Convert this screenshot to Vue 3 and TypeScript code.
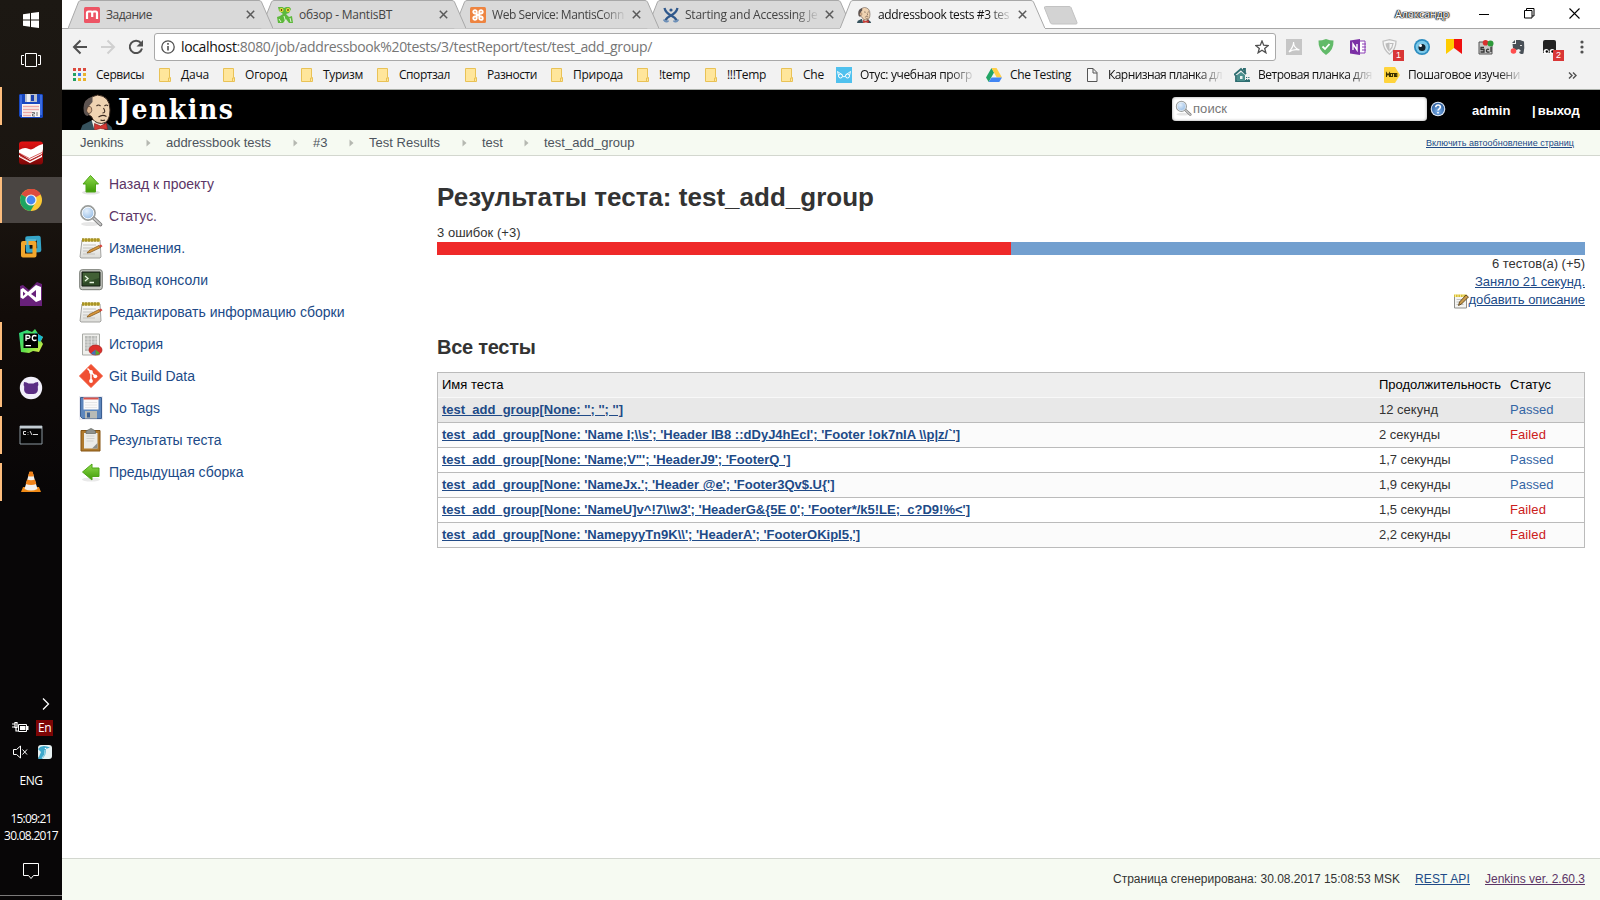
<script setup lang="ts">
interface Tab { title: string; icon: string; w?: number; active?: boolean; long?: boolean }
interface Mark { label: string; icon: string; slot: number; w: number; fade?: boolean }
interface TestRow { name: string; w: number; time: string; tw: number; ok: boolean }

// Spreads or tightens the tracking of a label so that it fills the given width.
const vFit = {
  mounted(el: HTMLElement, binding: { value?: number }) {
    if (!binding.value) return
    const n = (el.textContent || '').trim().length
    const width = el.getBoundingClientRect().width
    el.style.letterSpacing = ((binding.value - width) / n).toFixed(3) + 'px'
  },
}

const dock = [
  { icon: 'floppy', run: true }, { icon: 'reader' }, { icon: 'chrome', run: true, active: true },
  { icon: 'vm' }, { icon: 'vs' }, { icon: 'pycharm', run: true }, { icon: 'cat', run: true },
  { icon: 'cmd', run: true }, { icon: 'cone', run: true },
]

const tabs: Tab[] = [
  { title: 'Задание', icon: 'f-m', w: 46 },
  { title: 'обзор - MantisBT', icon: 'f-mantis', w: 93 },
  { title: 'Web Service: MantisConn', icon: 'f-xampp', w: 132, long: true },
  { title: 'Starting and Accessing Je', icon: 'f-conf', w: 132.5, long: true },
  { title: 'addressbook tests #3 tes', icon: 'butler', w: 131, active: true, long: true },
]

const marks: Mark[] = [
  { label: 'Сервисы', icon: 'b-apps', slot: 85, w: 48 },
  { label: 'Дача', icon: 'b-folder', slot: 64, w: 28 },
  { label: 'Огород', icon: 'b-folder', slot: 78, w: 42 },
  { label: 'Туризм', icon: 'b-folder', slot: 76, w: 40 },
  { label: 'Спортзал', icon: 'b-folder', slot: 88, w: 51 },
  { label: 'Разности', icon: 'b-folder', slot: 86, w: 50 },
  { label: 'Природа', icon: 'b-folder', slot: 86, w: 50 },
  { label: '!temp', icon: 'b-folder', slot: 68, w: 31 },
  { label: '!!!Temp', icon: 'b-folder', slot: 76, w: 39 },
  { label: 'Che', icon: 'b-folder', slot: 57, w: 21 },
  { label: 'Отус: учебная прогр', icon: 'b-otus', slot: 150, w: 112, fade: true },
  { label: 'Che Testing', icon: 'b-drive', slot: 98, w: 61 },
  { label: 'Карнизная планка дл', icon: 'b-doc', slot: 150, w: 114, fade: true },
  { label: 'Ветровая планка для', icon: 'b-house', slot: 150, w: 114, fade: true },
  { label: 'Пошаговое изучени', icon: 'b-moto', slot: 150, w: 112, fade: true },
]

const exts = [
  { icon: 'e-pdf' }, { icon: 'e-shield' }, { icon: 'e-note' }, { icon: 'e-v', badge: '1' }, { icon: 'e-eye' },
  { icon: 'e-ya' }, { icon: 'e-sel' }, { icon: 'e-ever' }, { icon: 'e-tamper', badge: '2' },
]

const crumbs = [
  { t: 'Jenkins', w: 43.5, slot: 86 }, { t: 'addressbook tests', w: 105, slot: 147 }, { t: '#3', w: 14.5, slot: 56 },
  { t: 'Test Results', w: 71, slot: 113 }, { t: 'test', w: 21, slot: 62 }, { t: 'test_add_group', w: 90.5, slot: 100 },
]

const tasks = [
  { t: 'Назад к проекту', icon: 'up', w: 105, seen: true },
  { t: 'Статус.', icon: 'search', w: 48, seen: true },
  { t: 'Изменения.', icon: 'notepad', w: 76 },
  { t: 'Вывод консоли', icon: 'terminal', w: 99 },
  { t: 'Редактировать информацию сборки', icon: 'notepad', w: 235.5 },
  { t: 'История', icon: 'graph', w: 54 },
  { t: 'Git Build Data', icon: 'git', w: 86 },
  { t: 'No Tags', icon: 'save', w: 51 },
  { t: 'Результаты теста', icon: 'clipboard', w: 112.5 },
  { t: 'Предыдущая сборка', icon: 'prev', w: 134.5 },
]

const rows: TestRow[] = [
  { name: `test_add_group[None: ''; ''; '']`, w: 181, time: '12 секунд', tw: 59, ok: true },
  { name: `test_add_group[None: 'Name I;\\\\s'; 'Header IB8 ::dDyJ4hEcI'; 'Footer !ok7nIA \\\\p|z/\`']`, w: 518, time: '2 секунды', tw: 61, ok: false },
  { name: `test_add_group[None: 'Name;V"'; 'HeaderJ9'; 'FooterQ ']`, w: 348.5, time: '1,7 секунды', tw: 71.5, ok: true },
  { name: `test_add_group[None: 'NameJx.'; 'Header @e'; 'Footer3Qv$.U{']`, w: 392.5, time: '1,9 секунды', tw: 71.5, ok: true },
  { name: `test_add_group[None: 'NameU]v^!7\\\\w3'; 'HeaderG&{5E 0'; 'Footer*/k5!LE;_c?D9!%<']`, w: 528, time: '1,5 секунды', tw: 71.5, ok: false },
  { name: `test_add_group[None: 'NamepyyTn9K\\\\'; 'HeaderA'; 'FooterOKipI5,']`, w: 418, time: '2,2 секунды', tw: 71.5, ok: false },
]
</script>

<template>
  <div class="screen">
    <svg class="defs" width="0" height="0" aria-hidden="true">
      <defs>
        <linearGradient id="gGreen" x1="0" y1="0" x2="0" y2="1"><stop offset="0" stop-color="#8fdc4c" /><stop offset="1" stop-color="#3f9a06" /></linearGradient>
        <linearGradient id="gTeal" x1="0" y1="0" x2="1" y2="1"><stop offset="0" stop-color="#21d789" /><stop offset=".55" stop-color="#5fe04a" /><stop offset="1" stop-color="#f4ee46" /></linearGradient>
        <linearGradient id="gRed" x1="0" y1="0" x2="0" y2="1"><stop offset="0" stop-color="#e31313" /><stop offset="1" stop-color="#7d0707" /></linearGradient>
        <linearGradient id="gPaper" x1="0" y1="0" x2="0" y2="1"><stop offset="0" stop-color="#fff" /><stop offset="1" stop-color="#dcdcd8" /></linearGradient>
        <radialGradient id="gLens" cx=".4" cy=".35" r=".7"><stop offset="0" stop-color="#e4f0fc" /><stop offset="1" stop-color="#8fb8e4" /></radialGradient>
        <radialGradient id="gBlue" cx=".5" cy=".7" r=".6"><stop offset="0" stop-color="#79aee8" /><stop offset="1" stop-color="#3465a4" /></radialGradient>
      </defs>
      <symbol id="floppy" viewBox="0 0 24 24"><path d="M1 0h22l1 1v22l-1 1H2l-2-2V1z" fill="#1747c0" /><path d="M1 1h2v20H1zM21 1h2v20h-2z" fill="#3a6be0" /><path d="M6 0h12v8H6z" fill="#b9bfca" /><path d="M8 0h3v8H8z" fill="#eceff4" /><path d="M12 1h3v6h-3z" fill="#1a3fae" /><path d="M3 10h18v13H3z" fill="#f8f4f2" /><path d="M4 12.500h16M4 15.500h16M4 18.500h9M4 21.500h8" stroke="#eba7a7" stroke-width="1.400" /><path d="M13 18.500h2.500v1.500h-2v2h2.500M18 18v4" stroke="#555" fill="none" stroke-width=".8" /></symbol>
      <symbol id="reader" viewBox="0 0 24 24"><rect width="24" height="23" y=".5" rx="3" fill="url(#gRed)" /><path d="M0 9c4-2 6-3 10-1s6-3 14-5v5l-1 5-12 6L0 12z" fill="#fff" /><path d="M0 14l11 6 12-6v2l-12 6L0 16z" fill="#fff" /><path d="M0 12l10.500 5.500L23 11.500M1 15l10 5 11-5.500" stroke="#c51a1a" fill="none" stroke-width=".7" /></symbol>
      <symbol id="chrome" viewBox="0 0 24 24"><circle cx="12" cy="12" r="11" fill="#fbc934" /><path d="M12 12L2.500 6.500A11 11 0 0 1 21.500 6.500z" fill="#dd4b3e" /><path d="M12 6.500h9.800A11 11 0 0 0 12 1z" fill="#dd4b3e" /><path d="M2.500 6.500A11 11 0 0 0 11.500 23l5-8.500L12 12z" fill="#1da462" /><circle cx="12" cy="12" r="5.600" fill="#f3f3f3" /><circle cx="12" cy="12" r="4.400" fill="#4787f0" /></symbol>
      <symbol id="vm" viewBox="0 0 24 24"><path d="M8.500 3h11.500v12.500H8.500z" fill="none" stroke="#35a5c8" stroke-width="4" stroke-linejoin="round" transform="rotate(-3 14 9)" /><path d="M4 8h11.500v12.500H4z" fill="none" stroke="#f1a62c" stroke-width="4" stroke-linejoin="round" /><path d="M8.500 10V5h9" fill="none" stroke="#55b7d0" stroke-width="2" /></symbol>
      <symbol id="vs" viewBox="0 0 24 24"><path d="M1 4l3-1 6 5 8-8 5 2v22H1z" fill="#68217a" /><path d="M1.500 7.500L4 6l5 4 8-7 5 2v13l-5 2-8-7-5 4-2.500-1.500z" fill="#fff" /><path d="M4 9.500v4.500l2.500-2.200zM17 8v7.500L12 12z" fill="#68217a" /></symbol>
      <symbol id="pycharm" viewBox="0 0 24 24"><path d="M0 4l8-3 5 2 3-3 4 6 4 2-2 4 2 3-4 8-6-1-4 2-8-1z" fill="url(#gTeal)" /><path d="M16 3l8 5-3 5-5-4z" fill="#18b5d1" /><path d="M4.500 4.500h14.500v14.500H4.500z" fill="#000" /><path d="M7 12V6.500h2q2 0 2 1.500T9 9.500H7M17.500 7.300q-1-.8-2-.8-2.200 0-2.200 2.500t2.200 2.500q1 0 2-.8" fill="none" stroke="#fff" stroke-width="1.300" /><path d="M6.500 16h5.500v1.300H6.500z" fill="#fff" /></symbol>
      <symbol id="cat" viewBox="0 0 24 24"><circle cx="12" cy="12" r="11.200" fill="#f1effa" /><path d="M5 6q3 0 4.500 1.500h5Q16 6 19 6q.8 3-.2 4.500 1 7.500-4.300 7.500h-5q-5.300 0-4.300-7.500Q4.200 9 5 6z" fill="#5a2d84" /></symbol>
      <symbol id="cmd" viewBox="0 0 24 24"><path d="M1 3h22v18H1z" fill="#050505" stroke="#8c98a0" /><path d="M1 3h22v2.500H1z" fill="#c3ccd2" /><path d="M7 8.500H4.500v3H7M9 9v.6M9 11v.6M11 8l2 4M14 11.500h5" stroke="#ddd" fill="none" /></symbol>
      <symbol id="cone" viewBox="0 0 24 24"><path d="M4 17h16l2 5H2z" fill="#f08a16" /><path d="M10.500 2h3l5 17q-6.500 3-13 0z" fill="#f3f1ee" /><path d="M10.500 1.500h3L15 6q-3 1.200-6 0zM8 9.500q4 1.500 8 0l1.300 4.500q-5 2-10.600 0z" fill="#f08218" /></symbol>

      <symbol id="butler" viewBox="0 0 32 36"><path d="M0 36l2-5 8-4h14l7 6 1 3z" fill="#36525d" /><path d="M11 26l12 1 1 9H14z" fill="#f3efe6" /><path d="M6 14Q6 3 17 1q12.500 1 12.500 15Q29.500 29 21 29.500q-8-.5-10-7-5-2-5-8.500z" fill="#efd3b2" stroke="#3b2a20" /><path d="M12 2.500Q3 5 3 14q0 8 4.500 8l2-3-1-7 3.500-4z" fill="#5d5350" /><path d="M7 13q3-2 4 1t-1 5-4-2z" fill="#dcb48f" stroke="#4a352a" stroke-width=".7" /><path d="M16 12q2-2 4 0M24 12q2-2 3.500 0M23 14q3 5-1 5M18 23q4-3 8-.5M20 26q2.500 1 4.500 0" fill="none" stroke="#3b2a20" stroke-width="1.100" /><path d="M14 29.500l6 2.500 6-3 1 6.500-7-1-6 1.500z" fill="#d33833" stroke="#7d1616" stroke-width=".6" /></symbol>
      <symbol id="f-m" viewBox="0 0 16 16"><rect width="16" height="16" rx="1.500" fill="#ed5565" /><path d="M3 12V6q0-1.500 1.500-1.500H7Q8.200 4.500 8.200 6v4V6q0-1.500 1.500-1.500h2Q13 4.500 13 6v6" stroke="#fff" stroke-width="2.200" fill="none" /></symbol>
      <symbol id="f-mantis" viewBox="0 0 16 16"><path d="M1 0q4-1 6 1 5-3 7 1l-2 4-3 1 3 3 3-1 1 7h-4l-3-4-3 4H1l-1-6 3-1 3-2-4-3z" fill="#5db83c" /><circle cx="4.500" cy="3" r="2" fill="#f6df3a" /><circle cx="11" cy="3" r="2" fill="#f6df3a" /><circle cx="4.500" cy="3" r=".8" /><circle cx="11" cy="3" r=".8" /><path d="M7 9l2 7M2 12l2 3M13 11l1 4" stroke="#e0f5d2" /></symbol>
      <symbol id="f-xampp" viewBox="0 0 16 16"><rect width="16" height="16" rx="1.500" fill="#ee8440" /><path d="M6.500 8h3M6.500 6.500h-1.500a1.700 1.700 0 1 1 1.700-1.700v6.400a1.700 1.700 0 1 1-1.700-1.700h1.500M9.500 6.500h1.500a1.700 1.700 0 1 0-1.700-1.700v6.400a1.700 1.700 0 1 0 1.700-1.700H9.500" fill="none" stroke="#fff" stroke-width="1.900" /></symbol>
      <symbol id="f-conf" viewBox="0 0 16 16"><path d="M1.500 1q1 4.500 6.500 7.500 4.500 2 5.500 5M14.500 1q-1 4.500-6.500 7.500-4.500 2-5.500 5" fill="none" stroke="#2f588c" stroke-width="2.300" /><circle cx="8" cy="3" r="1.600" fill="#2f588c" /><path d="M.5 12.500q3 4 5 1M15.500 12.500q-3 4-5 1" fill="none" stroke="#6c8fb8" stroke-width="1.600" /></symbol>

      <symbol id="b-apps" viewBox="0 0 16 16"><path d="M1 1h3v3H1zM6 1h3v3H6zM11 1h3v3h-3z" fill="#dc4a3e" /><path d="M1 6h3v3H1z" fill="#22a162" /><path d="M6 6h3v3H6z" fill="#3f7fe8" /><path d="M11 6h3v3h-3zM6 11h3v3H6zM11 11h3v3h-3z" fill="#e9b32c" /><path d="M1 11h3v3H1z" fill="#22a162" /></symbol>
      <symbol id="b-folder" viewBox="0 0 16 16"><path d="M2.500 1.500h10v9h1v4h-11z" fill="#ffe69b" stroke="#e9c256" /><path d="M11.500 14v-3h1.500" fill="none" stroke="#e9c256" /></symbol>
      <symbol id="b-otus" viewBox="0 0 16 16"><path d="M0 0h16v16H0z" fill="#4fc1ee" /><path d="M1.500 4.500L2.500 8.500M14.500 4.500L13.500 8.500M6.800 9L8 10l1.200-1M1.500 4.500L6.500 8M14.500 4.500L9.500 8" stroke="#fff" fill="none" stroke-width=".9" /><circle cx="4.500" cy="9" r="2" stroke="#fff" fill="none" /><circle cx="11.500" cy="9" r="2" stroke="#fff" fill="none" /></symbol>
      <symbol id="b-drive" viewBox="0 0 16 16"><path d="M5.500 1L0 10.500 2.700 15 8 5.500z" fill="#22a565" /><path d="M5.500 1h5L16 10.500h-5.300z" fill="#ffcf48" /><path d="M5.500 10.500H16L13.300 15H2.700z" fill="#4286f4" /></symbol>
      <symbol id="b-doc" viewBox="0 0 16 16"><path d="M3.500 1.500h5.500l4 4v9H3.500zM9 1.500V6h4" fill="#f8f8f8" stroke="#555" /></symbol>
      <symbol id="b-house" viewBox="0 0 16 16"><path d="M0 8l7-6 5 5M2 8v6h14M9 2h2v4" fill="none" stroke="#2e6d70" stroke-width="1.800" /><path d="M3 8l4-3 4 3v6H3z" fill="#4b8f8d" /><path d="M6 9h2.500v3H6z" fill="#eaf4f2" /><path d="M12 10.500h4M12 12.500h4" stroke="#2e6d70" stroke-dasharray="1 .8" /></symbol>
      <symbol id="b-moto" viewBox="0 0 16 16"><path d="M1 0h10l5 8-5 8H1q-1 0-1-1V1q0-1 1-1z" fill="#ffd43d" /><path d="M2.500 10V6L4 8l1.500-2v4M6.500 6.500h2v3h-2zM9 6.500h1.500V10M11.500 9.500V6.500h1.300v3z" fill="none" stroke="#3b3000" stroke-width="1.100" /></symbol>

      <symbol id="e-pdf" viewBox="0 0 16 16"><path d="M0 0h16v16H0z" fill="#c6c6c6" /><path d="M3 13q5-6 4.500-10 0 6 6 8-6-1.500-10.500 2z" fill="none" stroke="#fff" stroke-width="1.200" /></symbol>
      <symbol id="e-shield" viewBox="0 0 16 16"><path d="M8 0q4 1.500 7.500 1.500Q16 11 8 16 0 11 .5 1.500 4 1.500 8 0z" fill="#62ba69" /><path d="M4.500 7.500L7 10l4.500-5" fill="none" stroke="#fff" stroke-width="1.800" /></symbol>
      <symbol id="e-note" viewBox="0 0 16 16"><path d="M9 2h6v12H9z" fill="#fff" stroke="#8b3fb5" /><path d="M12 5h4M12 8h4M12 11h4" stroke="#8b3fb5" /><path d="M0 1.500L10 0v16L0 14.500z" fill="#7b2fa5" /><path d="M3 11V5l4 6V5" fill="none" stroke="#fff" stroke-width="1.400" /></symbol>
      <symbol id="e-v" viewBox="0 0 16 16"><path d="M7.500.7l6.500 1.500q0 8-6.500 13Q1 10 1 2.200z" fill="#f5f5f5" stroke="#c0c0c0" stroke-width="1.300" /><path d="M7.500 3.500v9.500Q4 9.500 3.500 4.500z" fill="#bdbdbd" /><path d="M7.500 4.500h3.500Q10.500 9 7.500 11.500" fill="none" stroke="#bdbdbd" stroke-width="1.200" /></symbol>
      <symbol id="e-eye" viewBox="0 0 16 16"><circle cx="8" cy="8" r="8" fill="#2d8dc0" /><circle cx="8" cy="8" r="6.300" fill="#7cc9e9" /><circle cx="8" cy="8.500" r="3.500" fill="#12222c" /><circle cx="6.500" cy="6.500" r="1.500" fill="#fff" /></symbol>
      <symbol id="e-ya" viewBox="0 0 16 16"><path d="M0 0h8v9l-8 6z" fill="#fc0" /><path d="M8 0h8v15L8 9z" fill="#f01010" /></symbol>
      <symbol id="e-sel" viewBox="0 0 16 16"><path d="M1 3h13v12H1z" fill="#c7c7c7" stroke="#555" /><circle cx="7.500" cy="3.800" r="2.800" fill="#d93030" /><circle cx="12.500" cy="4.500" r="3" fill="#2e9a3a" /><path d="M6 8.500H3v2h3v2.500H2.500M11 10.500q-2-1-2.500 1t3 1.500M13 8v5" fill="none" stroke="#333" stroke-width="1.300" /></symbol>
      <symbol id="e-ever" viewBox="0 0 16 16"><path d="M6 1h4l4 1.500q.8 6-.5 12Q10 16 9 13l2-1-2-2-3 1-3-2-.5-4H6z" fill="#495057" /><path d="M2 4l3-3v3z" fill="#495057" /><circle cx="3.500" cy="12" r="2.800" fill="#ff4d4d" /><path d="M10 6.500h2" stroke="#ddd" /></symbol>
      <symbol id="e-tamper" viewBox="0 0 16 16"><path d="M3 1h9q2 0 2 2v11H1V3q0-2 2-2z" fill="#222" /><circle cx="4.200" cy="12.500" r="2.600" fill="#fff" /><circle cx="10.200" cy="12.500" r="2.600" fill="#fff" /><circle cx="4.800" cy="12.500" r="1.200" /><circle cx="10.500" cy="12.500" r="1.200" /></symbol>

      <symbol id="up" viewBox="0 0 24 24"><ellipse cx="12" cy="20.500" rx="9" ry="2" fill="#e2e2e2" /><path d="M11.500 3.500L19.500 12H16.500v8H7V12H4z" fill="url(#gGreen)" stroke="#4fa517" /></symbol>
      <symbol id="prev" viewBox="0 0 24 24"><ellipse cx="12" cy="19.500" rx="9" ry="2" fill="#e9e9e9" /><path d="M3.500 12L13 4v4h7v8.500h-7V20z" fill="url(#gGreen)" stroke="#4fa517" /></symbol>
      <symbol id="search" viewBox="0 0 24 24"><ellipse cx="11" cy="20" rx="9" ry="2" fill="#e6e6e6" /><path d="M14.500 14l7 6.500" stroke="#777" stroke-width="3.600" stroke-linecap="round" /><path d="M15 14.500l6.500 6" stroke="#c9c9c9" stroke-width="1.800" stroke-linecap="round" /><circle cx="9" cy="9" r="7" fill="url(#gLens)" stroke="#9a9d9b" stroke-width="1.800" /><circle cx="9" cy="9" r="5.800" fill="none" stroke="#f4f8fc" /></symbol>
      <symbol id="notepad" viewBox="0 0 24 24"><path d="M3 4h18l1 17-1 1H2l-1-1z" fill="url(#gPaper)" stroke="#a3a3a0" /><path d="M3 2.500h18v3H3z" fill="#c9b23a" /><path d="M4 2v4M7 2v4M10 2v4M13 2v4M16 2v4M19 2v4" stroke="#7f6d12" stroke-width=".9" /><path d="M4 9h13M4 12h10M4 15h5M4 18h12" stroke="#c3c3c0" /><path d="M8 17l2-2.500L20 9.500l1.500 2-10.500 5z" fill="#d9983c" stroke="#7a4d13" stroke-width=".7" /><path d="M20 9.500l2-1 1.500 1.800-2 1.200z" fill="#d6433b" /></symbol>
      <symbol id="terminal" viewBox="0 0 24 24"><rect x=".7" y="1.700" width="22.600" height="20" rx="2.500" fill="#c5c7c1" stroke="#777b74" /><path d="M3 4h18v14H3z" fill="#2f4a27" stroke="#151d12" /><path d="M4 5h16v5L4 15z" fill="#4a6a3d" opacity=".7" /><path d="M6 8l3 2.500L6 13M10.500 14.500H15" fill="none" stroke="#e8f5e0" stroke-width="1.300" /></symbol>
      <symbol id="graph" viewBox="0 0 24 24"><path d="M3.500 2h17v21h-17z" fill="#efefec" stroke="#a8aaa5" /><path d="M6 4h12v15H6z" fill="#b9bbb7" /><path d="M6 7h12M6 10h12M6 13h12M6 16h12M9 4v15M12.500 4v15M16 4v15" stroke="#e7e7e5" stroke-width=".7" /><ellipse cx="16.500" cy="18" rx="6.500" ry="5" fill="#dd2f2a" stroke="#a81b17" stroke-width=".7" /><path d="M16.500 17.500l4.500 3.700q-2 1.500-4.500 1.700z" fill="#59a82c" /><path d="M16.500 17.500v5.400q-3 0-4.500-1.700z" fill="#4472b8" /></symbol>
      <symbol id="git" viewBox="0 0 24 24"><path d="M12 .5L23.500 12 12 23.500.5 12z" fill="#f05033" stroke="#f05033" stroke-linejoin="round" /><path d="M8.500 4.500L12 8v9M12 8l4.500 4.500" stroke="#fff" stroke-width="1.500" fill="none" /><circle cx="12" cy="8" r="1.900" fill="#fff" /><circle cx="12" cy="17" r="1.900" fill="#fff" /><circle cx="16.300" cy="12.300" r="1.900" fill="#fff" /></symbol>
      <symbol id="save" viewBox="0 0 24 24"><path d="M0 0h24v24H0z" fill="#ececf2" /><path d="M1.500 1.500h21v21h-19l-2-2z" fill="#5d86bd" stroke="#3c5f92" /><path d="M4.500 1.500h15v12h-15z" fill="#fafafa" /><path d="M4.500 1.500h15v2h-15z" fill="#d9534a" /><path d="M6 6.500h12M6 9h12M6 11.500h12" stroke="#ddd" stroke-width=".7" /><path d="M6 15h12v7.500H6z" fill="#b8bab6" /><path d="M8 16.500h3v5H8z" fill="#3c5f92" /></symbol>
      <symbol id="clipboard" viewBox="0 0 24 24"><path d="M2 2.500h19v20.500H2z" fill="#b07a2c" stroke="#855514" /><path d="M5 5h13.500v15.500H5z" fill="#ecece8" /><path d="M7.500 8h8M7.500 10.500h8M7.500 13h7" stroke="#d2d2ce" /><path d="M18.500 15v5.500H13z" fill="#8c8f8a" /><path d="M7 5.500V3l3-1.500q2-2 4 0L16.500 3v2.500z" fill="#8f928d" stroke="#666963" stroke-width=".7" /></symbol>
      <symbol id="edit16" viewBox="0 0 16 16"><path d="M1.500 3h12v12h-12z" fill="#f4f4f2" stroke="#8f8f8c" /><path d="M1 1.500h12.500v2.500H1z" fill="#d6bd35" /><path d="M2.500 1v3M5 1v3M7.500 1v3M10 1v3" stroke="#fff3a6" stroke-width=".8" /><path d="M3.500 6.500h6M3.500 9h4M3.500 11.500h7" stroke="#c4c4c0" /><path d="M5.500 12.500l1-3.500L13 2l2.500 2-7 7z" fill="#c99b4f" stroke="#4b3510" stroke-width=".8" /></symbol>
    </svg>

    <aside class="taskbar">
      <div class="win"><svg width="16" height="16" viewBox="0 0 16 16"><path d="M0 2.200L7 1.200v6.300H0zM8 1l8-1v7.500H8zM0 8.500h7v6.300l-7-1zM8 8.500h8V16l-8-1z" fill="#fff" /></svg></div>
      <div class="views"><svg width="20" height="14" viewBox="0 0 20 14"><path d="M4.500.5h11v13h-11zM3 2.500H.5v9H3M17 2.500h2.500v9H17" fill="none" stroke="#fff" /></svg></div>
      <div v-for="d in dock" :key="d.icon" class="app" :class="{ run: d.run, active: d.active }">
        <svg width="24" height="24"><use :href="'#' + d.icon" /></svg>
      </div>
      <div class="tray">
        <svg class="chev" width="8" height="12" viewBox="0 0 8 12"><path d="M1 .5L6.500 6 1 11.500" fill="none" stroke="#fff" stroke-width="1.300" /></svg>
        <div class="pair">
          <svg width="17" height="14" viewBox="0 0 17 14"><path d="M0 3h3M0 6h3M3 1.500v5h2v-5zM4 7v3h2" fill="none" stroke="#fff" stroke-width="1.200" /><path d="M6.500 3.500h8v7h-8z" fill="none" stroke="#fff" /><path d="M8 5h5.500v4H8zM15 5h1.500v4H15z" fill="#fff" /></svg>
          <span class="lang">En</span>
        </div>
        <div class="pair second">
          <svg width="17" height="14" viewBox="0 0 17 14"><path d="M.5 4.500h3l4-3.500v12l-4-3.500h-3zM9.500 4.500l4.500 5M14 4.500l-4.500 5" fill="none" stroke="#fff" /></svg>
          <svg width="14" height="14" viewBox="0 0 14 14"><rect width="14" height="14" rx="3" fill="#e8f2f3" /><path d="M0 4q3-4 9-2.500l3 1-4 1.500q.5 6-4 10H0l3-7z" fill="#3fa9cc" /><path d="M4 13q4-3 3-8" stroke="#bfe6ef" fill="none" /><circle cx="7.500" cy="3.500" r=".8" fill="#fff" /></svg>
        </div>
        <div class="eng"><span v-fit="23">ENG</span></div>
        <div class="clock"><span v-fit="41">15:09:21</span></div>
        <div class="date"><span v-fit="54">30.08.2017</span></div>
        <svg class="note" width="16" height="17" viewBox="0 0 16 17"><path d="M.5.500h15v12h-5L8 15.500l-2.500-3h-5z" fill="none" stroke="#fff" /></svg>
      </div>
      <div class="desk"></div>
    </aside>

    <div class="window">
      <header class="tabstrip">
        <div v-for="(t, i) in tabs" :key="t.icon" class="tab" :class="{ on: t.active }" :style="{ zIndex: t.active ? 9 : 6 - i }">
          <svg class="shape" width="205" height="30" viewBox="0 0 205 30"><path d="M0 28.500L10.500 2Q11.300.5 13 .5h178q1.700 0 2.500 1.500L205 28.500" :fill="t.active ? '#f2f2f2' : '#d9d9d9'" stroke="#a8a8a8" /><path v-if="t.active" d="M0 28h205v2H0z" fill="#f2f2f2" /></svg>
          <svg class="fav" width="16" height="16"><use :href="'#' + t.icon" /></svg>
          <span class="title" :class="{ soft: t.long }"><span v-fit="t.w">{{ t.title }}</span></span>
          <svg class="x" width="9" height="9" viewBox="0 0 9 9"><path d="M.8.800l7.400 7.400M8.200.800L.8 8.200" stroke="#5a5a5a" stroke-width="1.500" /></svg>
        </div>
        <svg class="newtab" width="36" height="19" viewBox="0 0 36 19"><path d="M2.500.500H26q1.500 0 2 1l6 15q.3 1.500-1 1.500H9.500q-1.500 0-2-1l-6-15Q1 .500 2.500.500z" fill="#d3d3d3" stroke="#c2c2c2" /></svg>
        <div class="sys">
          <span class="user"><span v-fit="54">Александр</span></span>
          <svg width="11" height="11" viewBox="0 0 11 11"><path d="M0 6.500h10" stroke="#000" /></svg>
          <svg width="11" height="11" viewBox="0 0 11 11"><path d="M.5 2.500h7.500v7.500H.500zM2.500 2.500v-2h7.500v7.500h-2" fill="none" stroke="#000" /></svg>
          <svg width="11" height="11" viewBox="0 0 11 11"><path d="M.5.500l10 10M10.500.500l-10 10" stroke="#000" stroke-width="1.100" /></svg>
        </div>
      </header>

      <div class="toolbar">
        <svg class="nav" width="16" height="16" viewBox="0 0 16 16"><path d="M15 8H2M8.500 1.500L2 8l6.500 6.500" fill="none" stroke="#505050" stroke-width="2" /></svg>
        <svg class="nav" width="16" height="16" viewBox="0 0 16 16"><path d="M1 8h13M7.500 1.500L14 8l-6.500 6.500" fill="none" stroke="#d0d0d0" stroke-width="2" /></svg>
        <svg class="nav" width="16" height="16" viewBox="0 0 16 16"><path d="M13 4.200A6.200 6.200 0 1 0 14 9.500" fill="none" stroke="#505050" stroke-width="2" /><path d="M15 1v6.500H8.500z" fill="#505050" /></svg>
        <div class="omni">
          <svg width="14" height="14" viewBox="0 0 14 14"><circle cx="7" cy="7" r="6.200" fill="none" stroke="#505050" stroke-width="1.300" /><path d="M7 6v4.500M7 3v1.700" stroke="#505050" stroke-width="1.600" /></svg>
          <span class="url"><span v-fit="471"><b>localhost</b>:8080/job/addressbook%20tests/3/testReport/test/test_add_group/</span></span>
          <svg class="star" width="14" height="14" viewBox="0 0 14 14"><path d="M7 1l1.700 4.200 4.500.3-3.500 2.900 1.200 4.400L7 10.300l-3.900 2.500 1.200-4.400L.8 5.500l4.500-.3z" fill="none" stroke="#505050" stroke-width="1.300" /></svg>
        </div>
        <div class="exts">
          <div v-for="e in exts" :key="e.icon" class="ext">
            <svg width="16" height="16"><use :href="'#' + e.icon" /></svg>
            <span v-if="e.badge" class="badge">{{ e.badge }}</span>
          </div>
          <svg class="menu" width="4" height="14" viewBox="0 0 4 14"><circle cx="2" cy="2" r="1.600" fill="#505050" /><circle cx="2" cy="7" r="1.600" fill="#505050" /><circle cx="2" cy="12" r="1.600" fill="#505050" /></svg>
        </div>
      </div>

      <nav class="marks">
        <div v-for="m in marks" :key="m.label" class="mark" :style="{ width: m.slot + 'px' }">
          <svg width="16" height="16"><use :href="'#' + m.icon" /></svg>
          <span class="mtext" :class="{ fade: m.fade }"><span v-fit="m.w">{{ m.label }}</span></span>
        </div>
        <svg class="more" width="9" height="7" viewBox="0 0 9 7"><path d="M1 .5l3 3-3 3M5 .5l3 3-3 3" fill="none" stroke="#505050" stroke-width="1.400" /></svg>
      </nav>

      <div class="jhead">
        <svg class="butler" width="33" height="36"><use href="#butler" /></svg>
        <span class="brand"><span v-fit="116.500">Jenkins</span></span>
        <div class="search">
          <svg width="17" height="17"><use href="#search" /></svg>
          <span v-fit="34">поиск</span>
        </div>
        <svg class="help" width="16" height="16" viewBox="0 0 16 16"><circle cx="8" cy="8" r="7.300" fill="#dfe8f4" /><circle cx="8" cy="8" r="6.200" fill="url(#gBlue)" /><path d="M5.700 6.200q.2-2.200 2.400-2.200t2.300 2q0 1-1.200 1.800T8 9.600M8 11v1.500" fill="none" stroke="#fff" stroke-width="1.600" /></svg>
        <span class="who"><span v-fit="38.5">admin</span></span>
        <span class="out"><i>|</i><span v-fit="42">выход</span></span>
      </div>

      <div class="crumbs">
        <div v-for="(c, i) in crumbs" :key="c.t" class="crumb" :style="{ width: c.slot + 'px' }">
          <span v-fit="c.w">{{ c.t }}</span>
          <svg v-if="i < crumbs.length - 1" width="5" height="8" viewBox="0 0 5 8"><path d="M.500.500L4.500 4l-4 3.500z" fill="#b5b8b1" /></svg>
        </div>
        <a v-fit="148" class="auto">Включить автообновление страниц</a>
      </div>

      <div class="body">
        <nav class="tasks">
          <div v-for="t in tasks" :key="t.t" class="task" :class="{ seen: t.seen }">
            <svg width="24" height="24"><use :href="'#' + t.icon" /></svg>
            <span v-fit="t.w">{{ t.t }}</span>
          </div>
        </nav>
        <main class="main">
          <h1><span v-fit="437">Результаты теста: test_add_group</span></h1>
          <div class="fails"><span v-fit="83.500">3 ошибок (+3)</span></div>
          <div class="bar"><div class="red"></div></div>
          <div class="stat"><span v-fit="93">6 тестов(а) (+5)</span></div>
          <div class="stat"><a v-fit="110">Заняло 21 секунд.</a></div>
          <div class="stat"><svg width="16" height="16"><use href="#edit16" /></svg><a v-fit="116.500">добавить описание</a></div>
          <h2><span v-fit="98.500">Все тесты</span></h2>
          <div class="table">
            <div class="row head">
              <span class="c1"><span v-fit="61.500">Имя теста</span></span>
              <span class="c2"><span v-fit="122">Продолжительность</span></span>
              <span class="c3"><span v-fit="41">Статус</span></span>
            </div>
            <div v-for="r in rows" :key="r.name" class="row">
              <span class="c1"><a v-fit="r.w">{{ r.name }}</a></span>
              <span class="c2"><span v-fit="r.tw">{{ r.time }}</span></span>
              <span class="c3" :class="r.ok ? 'pass' : 'fail'"><span v-fit="r.ok ? 43.5 : 36">{{ r.ok ? 'Passed' : 'Failed' }}</span></span>
            </div>
          </div>
        </main>
      </div>

      <footer class="foot">
        <span v-fit="287">Страница сгенерирована: 30.08.2017 15:08:53 MSK</span>
        <a v-fit="55">REST API</a>
        <a v-fit="100" class="ver">Jenkins ver. 2.60.3</a>
      </footer>
    </div>
  </div>
</template>

<style>
body { overflow: hidden; background: #fff; }
</style>

<style scoped>
.screen { display: flex; width: 1600px; height: 900px; font-family: "Liberation Sans", Arial, sans-serif; font-size: 13px; color: #333; white-space: pre; overflow: hidden; }
svg { display: block; flex: none; }
.defs { position: absolute; }
.screen span, .screen a { display: inline-block; }

.taskbar { width: 62px; height: 900px; flex: none; box-sizing: border-box; background: linear-gradient(#1c1813 0, #1a1510 22%, #120c09 35%, #080607 55%, #080607 100%); color: #fff; display: flex; flex-direction: column; align-items: center; font-family: "Open Sans", "Noto Sans", sans-serif; font-size: 12px; }
.win { height: 40px; display: flex; align-items: center; }
.views { height: 40px; margin-bottom: 3px; display: flex; align-items: center; }
.app { width: 62px; height: 38px; margin: 4px 0 5px; box-sizing: border-box; display: flex; align-items: center; justify-content: center; }
.app.run { background: linear-gradient(#fdbd7d, #fdbd7d) left / 2px 100% no-repeat; }
.app.active { height: 46px; margin: 0 0 1px; background: linear-gradient(#fdbd7d, #fdbd7d) left / 2px 100% no-repeat, #4a4542; }
.tray { margin-top: auto; width: 62px; height: 197px; display: flex; flex-direction: column; align-items: center; }
.chev { margin: 0 0 0 29px; }
.pair { display: flex; align-items: center; width: 41px; height: 16px; margin-top: 10px; margin-left: 3px; justify-content: space-between; }
.pair.second { margin-top: 8px; width: 39px; margin-left: 3px; }
.lang { width: 17px; height: 16px; background: #7d0505; font-size: 12px; line-height: 16px; text-align: center; letter-spacing: -.5px; }
.eng { margin-top: 13px; line-height: 16px; }
.clock { margin-top: 21px; line-height: 18px; }
.date { margin-top: -1px; line-height: 18px; }
.note { margin-top: 18px; }
.desk { height: 4px; width: 62px; border-top: 1px solid #7b7979; }

.window { width: 1538px; height: 900px; display: flex; flex-direction: column; background: #fff; }
.tabstrip, .toolbar, .marks { font-family: "Open Sans", "Noto Sans", sans-serif; font-size: 12px; color: #222; }
.tabstrip { height: 29px; flex: none; display: flex; padding-left: 6px; background: linear-gradient(#a8a8a8, #a8a8a8) bottom / 100% 1px no-repeat, #fff; }
.tab { position: relative; width: 205px; height: 30px; margin-right: -12px; display: flex; align-items: center; box-sizing: border-box; padding: 0 0 1px 16px; flex: none; }
.tab.on { margin-right: -2px; }
.shape { position: absolute; left: 0; top: 0; }
.fav { position: relative; margin-right: 6px; }
.title { position: relative; width: 133px; line-height: 18px; color: #444; }
.soft { -webkit-mask: linear-gradient(90deg, #000 110px, transparent 135px); mask: linear-gradient(90deg, #000 110px, transparent 135px); }
.on .title { color: #111; }
.x { position: relative; margin-left: 7px; }
.newtab { margin-top: 6px; }
.sys { margin-left: auto; display: flex; align-items: center; height: 27px; padding-right: 20px; gap: 34px; }
.user { font-size: 11px; color: #fff; text-shadow: 0 0 1px #000, 0 0 1px #000, 1px 0 1px #333, -1px 0 1px #333; margin-right: -4px; }

.toolbar { height: 35px; flex: none; background: #f2f2f2; display: flex; align-items: center; padding: 0 0 0 10px; }
.nav { margin-right: 12px; }
.omni { margin-left: -2px; width: 1122px; height: 28px; flex: none; box-sizing: border-box; border: 1px solid #a9a9a9; border-radius: 3px; background: #fff; display: flex; align-items: center; padding: 0 6px; }
.url { font-size: 14px; line-height: 20px; color: #767676; margin-left: 6px; }
.url b { font-weight: 400; color: #111; }
.star { margin-left: auto; }
.exts { display: flex; align-items: center; margin-left: 10px; }
.ext { position: relative; width: 16px; margin-right: 16px; }
.badge { position: absolute; left: 11px; top: 11px; width: 11px; height: 11px; background: #d93636; color: #fff; font: 9px/11px "Liberation Sans", sans-serif; text-align: center; }
.menu { margin-left: 6px; }

.marks { height: 26px; box-sizing: border-box; flex: none; background: #f2f2f2; border-bottom: 1px solid #aaafa9; display: flex; align-items: center; padding: 0 0 3px 10px; color: #111; }
.mark { display: flex; align-items: center; flex: none; }
.mtext { margin-left: 8px; line-height: 18px; }
.fade { width: 116px; -webkit-mask: linear-gradient(90deg, #000 90px, transparent 116px); mask: linear-gradient(90deg, #000 90px, transparent 116px); }
.more { margin-left: 34px; }

.jhead { height: 40px; flex: none; background: #000; color: #fff; display: flex; align-items: center; font-weight: bold; }
.butler { align-self: flex-end; margin-left: 18px; }
.brand { margin-left: 5px; font: bold 28px/40px "DejaVu Serif Condensed", "DejaVu Serif", serif; margin-top: -1px; }
.search { margin-left: auto; width: 255px; height: 24px; background: #fff; border-radius: 4px; box-shadow: inset 0 0 3px #999; box-sizing: border-box; padding-left: 3px; display: flex; align-items: center; color: #777; font-weight: 400; margin-top: -3px; gap: 1px; }
.help { margin: -2px 0 0 3px; }
.who { margin-left: 26px; width: 58px; }
.out { width: 70px; }
.out i { font-style: normal; margin: 0 2px 0 2px; }

.crumbs { height: 25px; flex: none; background: #f6faf2; border-bottom: 1px solid #d3d7cf; display: flex; align-items: center; padding: 0 26px 0 18px; color: #4d545d; }
.crumb { display: flex; align-items: center; justify-content: space-between; box-sizing: border-box; padding-right: 15px; }
.auto { margin-left: auto; font-size: 9px; color: #204a87; text-decoration: underline; }

.body { flex: 1; display: flex; }
.tasks { width: 375px; flex: none; padding: 12px 0 0 17px; box-sizing: border-box; font-size: 14px; color: #204a87; }
.task { height: 32px; display: flex; align-items: center; gap: 6px; }
.task span { margin-top: -1px; }
.seen { color: #5c3566; }
.main { width: 1148px; }
h1 { margin: 23px 0 0; font-size: 26px; line-height: 36px; }
.fails { margin-top: 9px; height: 18px; line-height: 18px; }
.bar { height: 13px; background: #729fcf; }
.red { width: 50%; height: 13px; background: #ef2929; }
.stat { height: 18px; line-height: 18px; display: flex; justify-content: flex-end; }
.stat svg { margin-top: 2px; }
.stat a { color: #204a87; text-decoration: underline; }
h2 { margin: 26px 0 0; font-size: 20px; line-height: 24px; }
.table { margin-top: 13px; border: 1px solid #bbb; border-bottom: 0; }
.row { height: 24px; line-height: 23px; border-bottom: 1px solid #bbb; display: flex; padding-left: 4px; }
.row:nth-child(odd) { background: #fbfbfb; }
.row.head { background: #eee; border-bottom-color: #f8f8f8; color: #000; }
.row:nth-child(2) { background: #e8e8e8; }
.c1 { width: 937px; font-weight: 700; }
.head .c1 { font-weight: 400; }
.c1 a { color: #204a87; text-decoration: underline; }
.c2 { width: 131px; }
.pass { color: #3465a4; }
.fail { color: #cc2020; }

.foot { height: 41px; box-sizing: content-box; flex: none; border-top: 1px solid #d3d7cf; background: linear-gradient(#f6faf2, #f6faf2); display: flex; align-items: flex-start; justify-content: flex-end; gap: 15px; padding-right: 15px; font-size: 12px; line-height: 39px; }
.foot a, .foot span { line-height: 14px; margin-top: 13px; }
.foot a { color: #204a87; text-decoration: underline; }
.foot .ver { color: #5c3566; }
</style>
